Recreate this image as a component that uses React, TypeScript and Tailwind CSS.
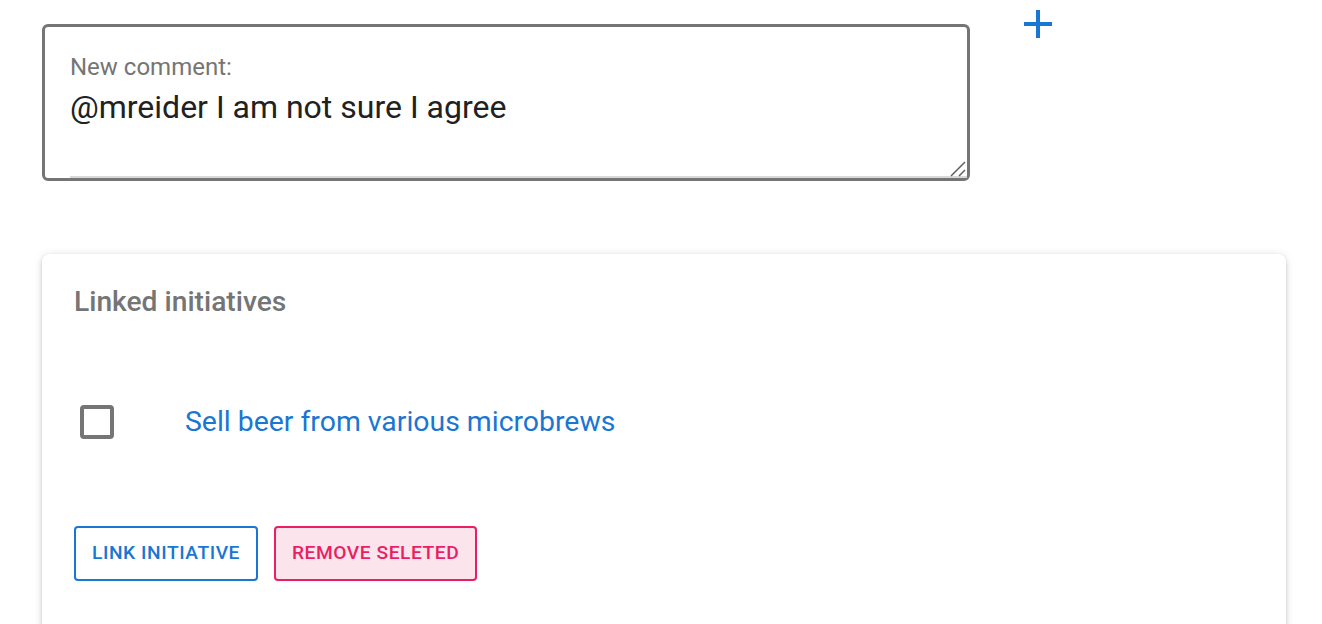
import React from "react";

const App: React.FC = () => {
  return (
    <div className="w-[1322px] h-[624px] overflow-hidden bg-white font-['Roboto',sans-serif]">
      <div className="flex items-start pl-[42px] pt-[10px]">
        <div className="relative mt-[14px] w-[928px] h-[157px] border-[3px] border-[#757575] rounded-[6px] pl-[25px] pt-[28px] flex flex-col">
          <label className="text-[24px] leading-[24px] text-[#757575]">New comment:</label>
          <textarea
            defaultValue="@mreider I am not sure I agree"
            className="mt-[8px] flex-1 w-full text-[32px] leading-[40px] text-[#212121] border-0 border-b-2 border-[#d9d9d9] outline-none resize-none bg-transparent"
          />
          {/* resize grip */}
          <svg width="16" height="16" viewBox="0 0 16 16" className="absolute right-[1px] bottom-[1px]">
            <path d="M1 15L15 1M9 15L15 9" stroke="#5f5f5f" strokeWidth="1.5" fill="none" />
          </svg>
        </div>
        <svg width="28" height="28" viewBox="0 0 28 28" className="ml-[54px]">
          <path d="M14 0v28M0 14h28" stroke="#1976d2" strokeWidth="4" fill="none" />
        </svg>
      </div>

      <div className="ml-[42px] mt-[73px] w-[1244px] h-[400px] bg-white rounded-[8px] shadow-[0_2px_4px_rgba(0,0,0,0.14),0_1px_10px_rgba(0,0,0,0.12)] pt-[34px] pl-[32px]">
        <h2 className="text-[28.2px] leading-[28px] font-medium text-[#757575]">Linked initiatives</h2>

        <div className="mt-[76px] h-[60px] flex items-center">
          <div className="ml-[6px] w-[34px] h-[34px] border-4 border-[#757575] rounded-[4px]" />
          <span className="ml-[71px] text-[28.4px] text-[#1976d2]">Sell beer from various microbrews</span>
        </div>

        <div className="mt-[74px] flex gap-[16px]">
          <button className="h-[55px] px-[16px] border-2 border-[#1976d2] rounded-[4px] text-[19.2px] font-medium tracking-[0.55px] text-[#1976d2] bg-white">
            LINK INITIATIVE
          </button>
          <button className="h-[55px] px-[16px] border-2 border-[#e91e63] rounded-[4px] text-[19.2px] font-medium tracking-[0.55px] text-[#e91e63] bg-[#fce4ec]">
            REMOVE SELETED
          </button>
        </div>
      </div>
    </div>
  );
};

export default App;
